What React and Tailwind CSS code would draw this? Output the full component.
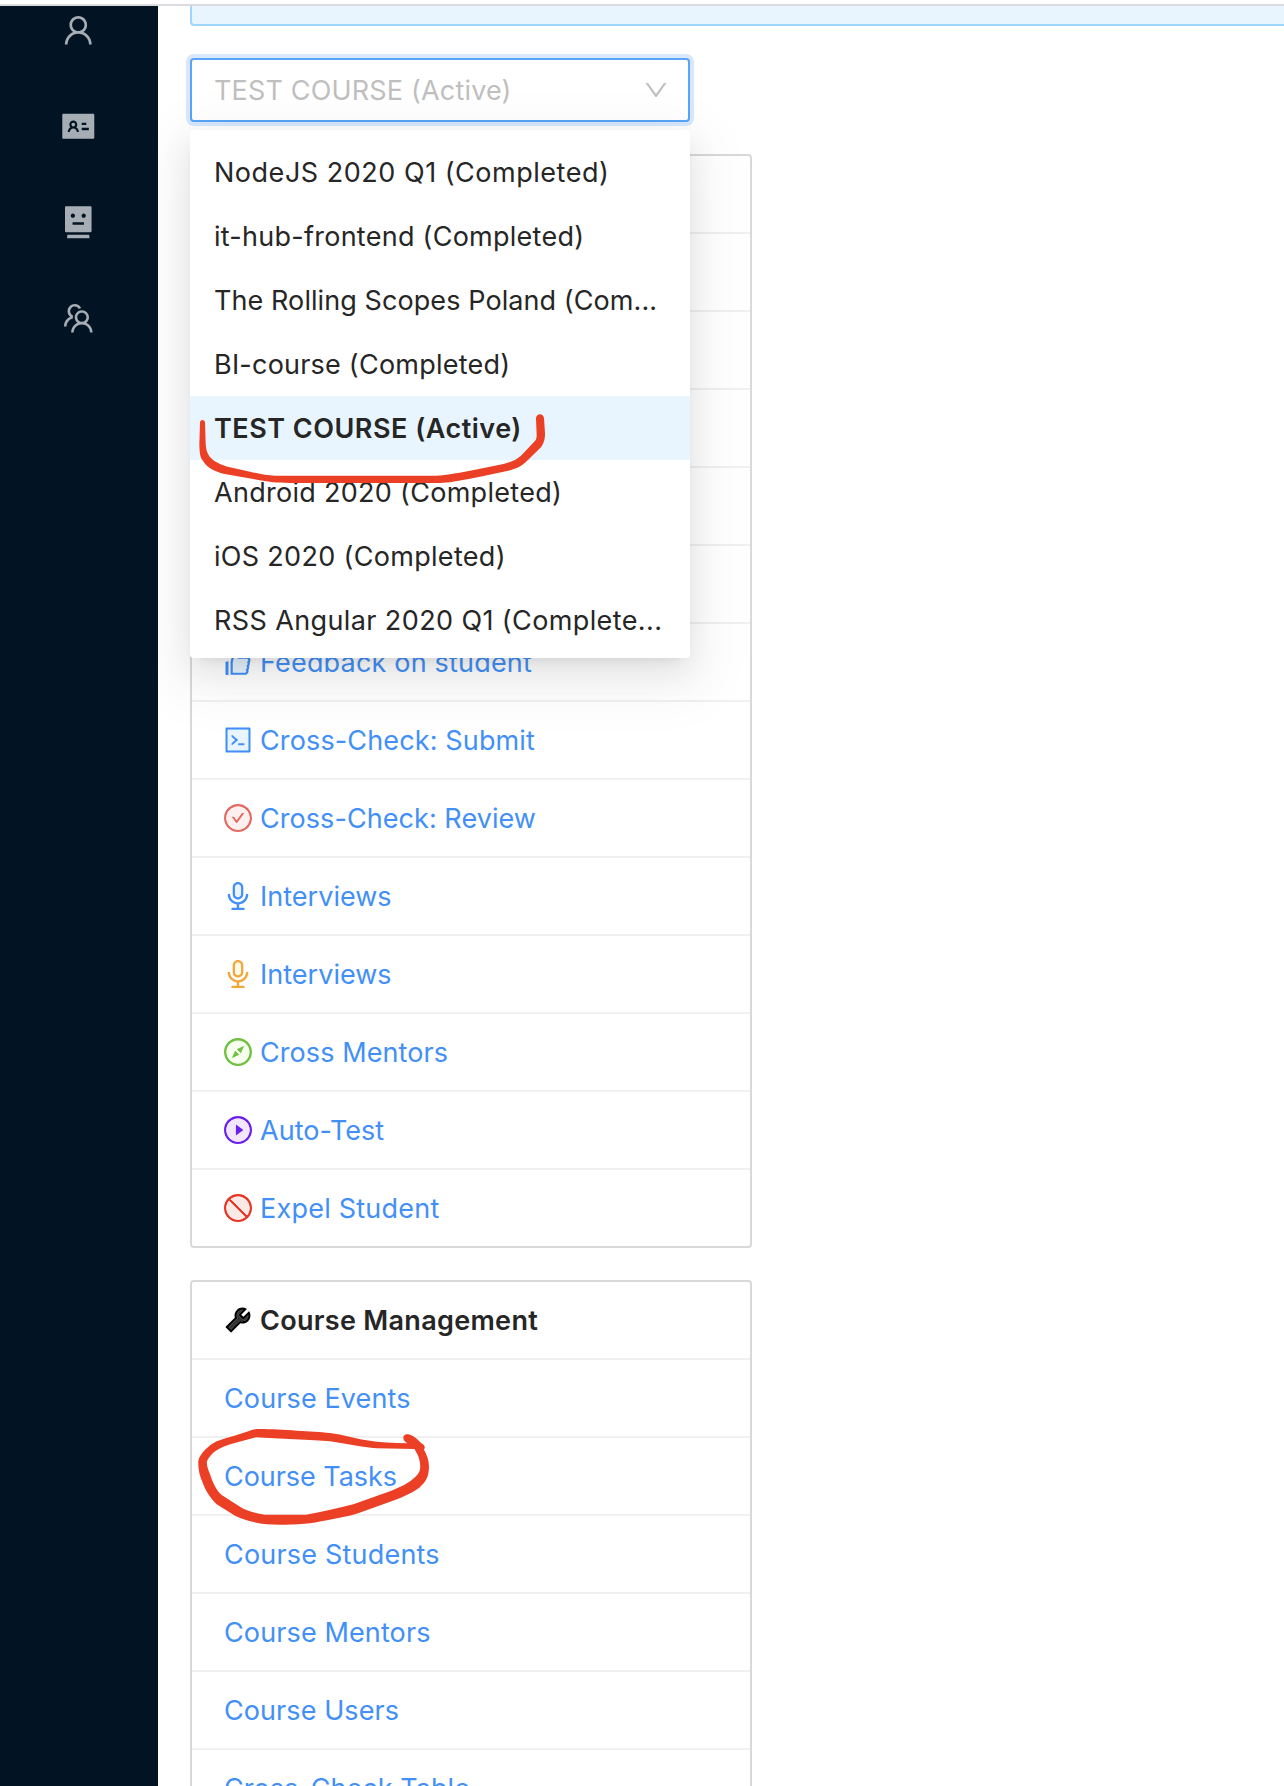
import {
  AiFillIdcard,
  AiFillRobot,
  AiOutlineDown,
  AiOutlineTeam,
  AiOutlineUser,
  AiTwotoneAudio,
  AiTwotoneCheckCircle,
  AiTwotoneCode,
  AiTwotoneCompass,
  AiTwotoneLike,
  AiTwotonePlayCircle,
  AiTwotoneStop,
  AiTwotoneTool,
} from "react-icons/ai";

const NAV = [AiOutlineUser, AiFillIdcard, AiFillRobot, AiOutlineTeam];

const COURSES = [
  { label: "NodeJS 2020 Q1 (Completed)", track: "tracking-[0.52px]" },
  { label: "it-hub-frontend (Completed)", track: "tracking-[0.26px]" },
  { label: "The Rolling Scopes Poland (Com...", track: "tracking-[0.08px]" },
  { label: "BI-course (Completed)", track: "tracking-[0.22px]" },
  { label: "TEST COURSE (Active)", track: "tracking-[0.5px]", selected: true },
  { label: "Android 2020 (Completed)", track: "tracking-[0.289px]" },
  { label: "iOS 2020 (Completed)", track: "tracking-[0.31px]" },
  { label: "RSS Angular 2020 Q1 (Complete...", track: "tracking-[0.39px]" },
];

const BLUE = "text-[#4290f7] [&>path[fill]:not([fill='#333'])]:fill-[#e8f5fe]";
const RED = "text-[#e66a64] [&>path[fill]:not([fill='#333'])]:fill-[#fdf1ef]";
const ORANGE = "text-[#f2a73b] [&>path[fill]:not([fill='#333'])]:fill-[#fffbe8]";
const GREEN = "text-[#70c041] [&>path[fill]:not([fill='#333'])]:fill-[#f8ffef]";
const PURPLE = "text-[#6b21ee] [&>path[fill]:not([fill='#333'])]:fill-[#f2e6fc]";
const CRIMSON = "text-[#e93323] [&>path[fill]:not([fill='#333'])]:fill-[#fae9e5]";
const BLACK = "text-black [&>path[fill]:not([fill='#333'])]:fill-[#333333]";

/* The first rows sit underneath the open course menu. */
const STUDENT_LINKS = [
  {},
  {},
  {},
  {},
  {},
  { label: "Feedback on student", icon: AiTwotoneLike, tone: BLUE, track: "tracking-[0.184px]" },
  { label: "Cross-Check: Submit", icon: AiTwotoneCode, tone: BLUE, track: "tracking-[0.133px]" },
  { label: "Cross-Check: Review", icon: AiTwotoneCheckCircle, tone: RED, track: "tracking-[0.06px]" },
  { label: "Interviews", icon: AiTwotoneAudio, tone: BLUE, track: "tracking-[0.02px]" },
  { label: "Interviews", icon: AiTwotoneAudio, tone: ORANGE, track: "tracking-[0.02px]" },
  { label: "Cross Mentors", icon: AiTwotoneCompass, tone: GREEN, track: "tracking-[0.08px]" },
  { label: "Auto-Test", icon: AiTwotonePlayCircle, tone: PURPLE, track: "tracking-[0.02px]" },
  { label: "Expel Student", icon: AiTwotoneStop, tone: CRIMSON, track: "tracking-[0.223px]" },
];

const MANAGEMENT_LINKS = [
  { label: "Course Events", track: "tracking-[0.12px]" },
  { label: "Course Tasks", track: "tracking-[-0.056px]" },
  { label: "Course Students", track: "tracking-[0.2px]" },
  { label: "Course Mentors", track: "tracking-[0.12px]" },
  { label: "Course Users", track: "tracking-[0.08px]" },
  { label: "Cross-Check Table", track: "tracking-[0.04px]" },
];

function RowIcon({ icon: Icon, tone }) {
  return (
    <span className="mr-2 flex size-7 flex-none items-center justify-center">
      <Icon className={`size-8 flex-none [&>path[fill='#333']]:fill-current ${tone}`} />
    </span>
  );
}

function Row({ children }) {
  return (
    <div className="flex h-[78px] items-center border-b-2 border-[#f0f0f0] px-8 last:h-[76px] last:border-b-0">
      {children}
    </div>
  );
}

function Card({ header, links }) {
  return (
    <section className="w-[562px] rounded-[4px] border-2 border-[#d9d9d9] bg-white">
      <Row>{header}</Row>
      {links.map(({ label, icon, tone, track }, i) => (
        <Row key={i}>
          {icon && <RowIcon icon={icon} tone={tone} />}
          {label && <a className={`whitespace-nowrap pt-0.5 text-[#4290f7] ${track}`}>{label}</a>}
        </Row>
      ))}
    </section>
  );
}

function CourseSelect() {
  return (
    <div className="relative w-[500px]">
      <div className="flex h-16 items-center justify-between rounded-[4px] border-2 border-[#57a5f8] bg-white pl-[22px] pr-[18px] shadow-[0_0_0_4px_#d9e7fc]">
        <span className="pt-0.5 tracking-[0.17px] text-[#bfbfbf]">TEST COURSE (Active)</span>
        <AiOutlineDown className="size-7 text-[#bfbfbf]" />
      </div>
      <ul className="absolute left-0 top-[72px] z-10 w-full rounded-[4px] bg-white pb-1.5 pt-2.5 shadow-[0_6px_12px_-8px_rgba(0,0,0,0.12),0_12px_32px_0_rgba(0,0,0,0.08),0_18px_56px_16px_rgba(0,0,0,0.05)]">
        {COURSES.map(({ label, track, selected }) => (
          <li
            key={label}
            className={`flex h-16 items-center whitespace-nowrap pl-6 pt-0.5 text-[#262626] ${track} ${
              selected ? "bg-[#e8f5fe] font-semibold" : ""
            }`}
          >
            {label}
          </li>
        ))}
      </ul>
    </div>
  );
}

/* Hand-drawn marks around the selected course and the tasks link. */
function Markup() {
  return (
    <svg
      className="pointer-events-none absolute left-0 top-0 z-20"
      width="1284"
      height="1786"
      fill="#ec4026"
      fillRule="evenodd"
    >
      <path
        transform="translate(180 380) scale(.33333)"
        d="M60 127C62 118 73 118 75 127L77 190C78 208 81 218 89 230C100 243 122 255 150 262L210 275C240 282 262 287 285 287H770C820 283 860 273 900 266L970 252C995 246 1010 238 1023 227L1064 184C1069 178 1070 173 1070 165L1068 115C1069 99 1090 98 1092 114L1095 160C1095 177 1093 187 1083 202L1040 244C1025 259 1008 267 985 272L900 290C860 297 820 307 780 309H330C290 309 265 306 240 301L130 281C102 274 80 262 67 240C59 228 59 215 58 195Z"
      />
      <path
        transform="translate(180 1240) scale(.33333)"
        d="M217 569C230 565 300 569 350 572C390 574 420 575 450 579C490 584 520 594 560 601C600 608 640 609 682 610C664 600 667 580 685 583C700 586 712 597 724 610C733 614 737 620 732 629C741 645 747 662 747 682C746 710 739 725 718 743C695 760 660 775 620 789L530 821C490 833 430 842 390 850C350 855 290 855 245 851C215 846 185 837 165 827L110 793C92 775 75 750 67 725C58 705 54 685 55 662C59 643 85 616 110 604C140 592 180 584 217 569ZM228 592C195 602 160 608 130 620C105 631 89 645 81 664C79 675 85 690 90 702C97 725 108 750 125 765L180 800C198 812 225 819 255 824H378C425 816 470 806 520 793L630 754C660 742 690 728 708 709C720 698 722 688 720 670C718 650 711 640 703 627L590 625C545 622 500 611 450 604C400 599 290 597 228 592Z"
      />
    </svg>
  );
}

export default function App() {
  return (
    <div className="relative flex h-[1786px] w-[1284px] flex-col overflow-hidden bg-white font-['Inter',sans-serif] text-[27px] leading-[44px]">
      <div className="h-1.5 flex-none border-b-2 border-[#dcdce0] bg-white" />
      <div className="flex min-h-0 flex-1">
        <aside className="z-20 flex w-[158px] flex-none flex-col items-center gap-[59.43px] bg-[#021424] pr-0.5 pt-[5.7px] text-[#a6adb4]">
          {NAV.map((Icon, i) => (
            <Icon key={i} className="size-[36.57px] flex-none" />
          ))}
        </aside>
        <main className="flex min-w-0 flex-1 flex-col gap-8 pl-8">
          <div className="h-5 flex-none rounded-bl-[4px] border-b-2 border-l-2 border-[#9fd5fa] bg-[#e8f5fe]" />
          <CourseSelect />
          <div className="flex flex-col gap-8">
            <Card header={null} links={STUDENT_LINKS} />
            <Card
              header={
                <>
                  <RowIcon icon={AiTwotoneTool} tone={BLACK} />
                  <h2 className="pt-0.5 font-semibold tracking-[0.309px] text-[#262626]">Course Management</h2>
                </>
              }
              links={MANAGEMENT_LINKS}
            />
          </div>
        </main>
      </div>
      <Markup />
    </div>
  );
}
